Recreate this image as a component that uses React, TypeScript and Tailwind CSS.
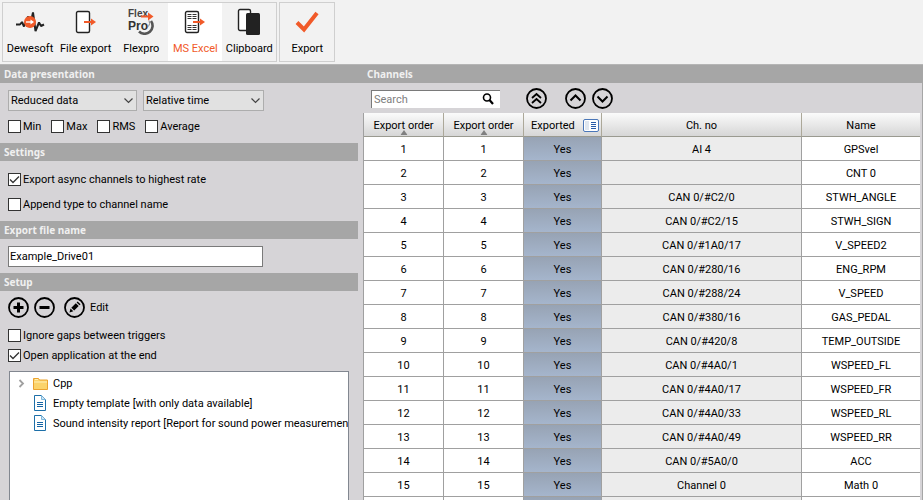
import type { ReactNode } from 'react'

interface Channel {
  order: number
  chNo: string
  name: string
}

const channels: Channel[] = [
  { order: 1, chNo: 'AI 4', name: 'GPSvel' },
  { order: 2, chNo: '', name: 'CNT 0' },
  { order: 3, chNo: 'CAN 0/#C2/0', name: 'STWH_ANGLE' },
  { order: 4, chNo: 'CAN 0/#C2/15', name: 'STWH_SIGN' },
  { order: 5, chNo: 'CAN 0/#1A0/17', name: 'V_SPEED2' },
  { order: 6, chNo: 'CAN 0/#280/16', name: 'ENG_RPM' },
  { order: 7, chNo: 'CAN 0/#288/24', name: 'V_SPEED' },
  { order: 8, chNo: 'CAN 0/#380/16', name: 'GAS_PEDAL' },
  { order: 9, chNo: 'CAN 0/#420/8', name: 'TEMP_OUTSIDE' },
  { order: 10, chNo: 'CAN 0/#4A0/1', name: 'WSPEED_FL' },
  { order: 11, chNo: 'CAN 0/#4A0/17', name: 'WSPEED_FR' },
  { order: 12, chNo: 'CAN 0/#4A0/33', name: 'WSPEED_RL' },
  { order: 13, chNo: 'CAN 0/#4A0/49', name: 'WSPEED_RR' },
  { order: 14, chNo: 'CAN 0/#5A0/0', name: 'ACC' },
  { order: 15, chNo: 'Channel 0', name: 'Math 0' },
]

/* ---------- Icons ---------- */

function DewesoftIcon() {
  return (
    <svg width="30" height="26" viewBox="0 0 30 26" fill="none" aria-hidden="true">
      <path
        d="M1 15.500h4l2-2.500 2 4.500 4-10 3 5 2-9 2.500 18.500 3.500-8.500 2 3.500 3-1.500"
        stroke="#222"
        strokeWidth="2"
        strokeLinejoin="bevel"
      />
      <circle cx="15" cy="13" r="6" fill="#f15a29" />
      <path d="M11 13h5" stroke="#fff" strokeWidth="1.400" />
      <path d="M15.500 10.500l3.500 2.500-3.500 2.500z" fill="#fff" />
    </svg>
  )
}

function FileExportIcon() {
  return (
    <svg width="22" height="24" viewBox="0 0 22 24" fill="none" aria-hidden="true">
      <rect x="1.500" y="1.500" width="13" height="21" rx="1.500" fill="#fff" stroke="#222" strokeWidth="1.400" />
      <path d="M9 12h8" stroke="#f15a29" strokeWidth="2" />
      <path d="M16 8.500l5 3.500-5 3.500z" fill="#f15a29" />
    </svg>
  )
}

function FlexproIcon() {
  return (
    <svg width="26" height="26" viewBox="0 0 26 26" aria-hidden="true">
      <path d="M23 12a8 8 0 0 1-12 10.500" fill="none" stroke="#555" strokeWidth="2.600" />
      <path d="M21 11.500a6 6 0 0 1-.5 6" fill="none" stroke="#888" />
      <text x="0" y="8" fontSize="10" fontWeight="bold" fontFamily="Liberation Sans, sans-serif" fill="#444">
        Flex
      </text>
      <text x="0" y="21" fontSize="12" fontWeight="bold" fontFamily="Liberation Sans, sans-serif" fill="#333">
        Pro
      </text>
      <path d="M13 7.500h8" stroke="#f15a29" strokeWidth="2" />
      <path d="M20 3.500l5.500 4-5.500 4z" fill="#f15a29" />
    </svg>
  )
}

function ExcelIcon() {
  return (
    <svg width="22" height="24" viewBox="0 0 22 24" fill="none" aria-hidden="true">
      <rect x="1.500" y="1.500" width="13" height="21" rx="1.500" fill="#fff" stroke="#222" strokeWidth="1.400" />
      <path
        d="M3.500 4.500h4M8.500 4.500h4M3.500 6.500h4M8.500 6.500h4M3.500 8.500h4M8.500 8.500h4M3.500 15.500h4M8.500 15.500h4M3.500 17.500h4M8.500 17.500h4M3.500 19.500h4M8.500 19.500h4"
        stroke="#333"
      />
      <path d="M9 12h8" stroke="#f15a29" strokeWidth="2" />
      <path d="M16 8.500l5 3.500-5 3.500z" fill="#f15a29" />
    </svg>
  )
}

function ClipboardIcon() {
  return (
    <svg width="24" height="28" viewBox="0 0 24 28" fill="none" aria-hidden="true">
      <rect x="1.500" y="1.500" width="12" height="21" rx="1.500" fill="#fff" stroke="#222" strokeWidth="1.400" />
      <rect x="9" y="5" width="14" height="22" rx="1.500" fill="#222" />
    </svg>
  )
}

function CheckIcon() {
  return (
    <svg width="24" height="24" viewBox="0 0 24 24" fill="none" aria-hidden="true">
      <path d="M2 12.500l7 7L22 3" stroke="#f15a29" strokeWidth="4" />
    </svg>
  )
}

function RoundIcon({ children }: { children: ReactNode }) {
  return (
    <svg width="21" height="21" viewBox="0 0 21 21" fill="none" stroke="#000" aria-hidden="true">
      <circle cx="10.500" cy="10.500" r="9.500" strokeWidth="1.800" />
      {children}
    </svg>
  )
}

function FolderIcon() {
  return (
    <svg width="15" height="13" viewBox="0 0 15 13" aria-hidden="true">
      <path d="M.5 12.500V1.500h5l1 1.500h8v9.500z" fill="#fbd36b" stroke="#eba22f" />
      <path d="M1 5h13" stroke="#fff0b8" />
      <path d="M2 2.500h3" stroke="#fff0b8" />
    </svg>
  )
}

function DocumentIcon() {
  return (
    <svg width="12" height="16" viewBox="0 0 12 16" fill="none" aria-hidden="true">
      <path d="M.5.500h7l4 4v11H.5z" fill="#fff" stroke="#1d6fa8" />
      <path d="M7.500.500v4h4" fill="#cfe6f5" stroke="#7db8dc" />
      <path d="M3 7.500h6M3 9.500h6M3 11.500h6" stroke="#1565a5" />
    </svg>
  )
}

/* ---------- Building blocks ---------- */

interface ToolButtonProps {
  label: string
  icon: ReactNode
  active?: boolean
}

function ToolButton({ label, icon, active }: ToolButtonProps) {
  return (
    <button
      className={`flex min-w-[54px] flex-col items-center px-[3px] pb-1 leading-4 ${
        active ? 'bg-white text-[#f15a29]' : 'text-black'
      }`}
    >
      <span className="flex h-[38px] items-center justify-center">{icon}</span>
      {label}
    </button>
  )
}

function SectionTitle({ children }: { children: ReactNode }) {
  return (
    <h2 className="h-[18px] shrink-0 bg-[#a6a6a6] pl-1 font-['Noto_Sans','DejaVu_Sans',sans-serif] text-[10px] leading-[18px] font-bold text-[#f0f0f0]">
      {children}
    </h2>
  )
}

function CheckBox({ label, checked }: { label: string; checked?: boolean }) {
  return (
    <label className="flex items-center gap-[2px]">
      <span className="relative flex size-[13px]">
        <input
          type="checkbox"
          defaultChecked={checked}
          className="peer size-[13px] appearance-none border border-[#333] bg-white"
        />
        <svg
          viewBox="0 0 13 13"
          className="pointer-events-none absolute inset-0 hidden size-[13px] peer-checked:block"
          fill="none"
          aria-hidden="true"
        >
          <path d="M2 6.500l3 3 6-6" stroke="#333" strokeWidth="1.300" />
        </svg>
      </span>
      {label}
    </label>
  )
}

function Dropdown({ label, value, className }: { label: string; value: string; className: string }) {
  return (
    <div className={`relative ${className}`}>
      <select
        aria-label={label}
        defaultValue={value}
        className="block h-[21px] w-full appearance-none border border-[#adadad] bg-[#e1e1e1] px-[2px]"
      >
        <option>{value}</option>
      </select>
      <svg
        className="pointer-events-none absolute top-[8px] right-[4px]"
        width="9"
        height="6"
        viewBox="0 0 9 6"
        fill="none"
        aria-hidden="true"
      >
        <path d="M.5.500l4 4 4-4" stroke="#444" strokeWidth="1.200" />
      </svg>
    </div>
  )
}

function SortMark() {
  return (
    <svg className="absolute bottom-[1px] left-1/2 -translate-x-1/2" width="7" height="5" viewBox="0 0 7 5" aria-hidden="true">
      <path d="M3.500 0L7 5H0z" fill="#808080" />
    </svg>
  )
}

/* ---------- Panels ---------- */

function Toolbar() {
  return (
    <header className="flex shrink-0 gap-[2px] border-b border-[#b5b5b5] bg-[#f2f2f2] p-[2px]">
      <div className="flex border border-[#cfcfcf]">
        <ToolButton label="Dewesoft" icon={<DewesoftIcon />} />
        <ToolButton label="File export" icon={<FileExportIcon />} />
        <ToolButton label="Flexpro" icon={<FlexproIcon />} />
        <ToolButton label="MS Excel" icon={<ExcelIcon />} active />
        <ToolButton label="Clipboard" icon={<ClipboardIcon />} />
      </div>
      <div className="flex border border-[#cfcfcf]">
        <ToolButton label="Export" icon={<CheckIcon />} />
      </div>
    </header>
  )
}

function OptionsPanel() {
  return (
    <aside className="flex w-[358px] shrink-0 flex-col">
      <SectionTitle>Data presentation</SectionTitle>
      <div className="px-2 pt-[7px] pb-[10px]">
        <div className="flex gap-[6px]">
          <Dropdown label="Data" value="Reduced data" className="w-[129px]" />
          <Dropdown label="Time" value="Relative time" className="w-[121px]" />
        </div>
        <div className="flex gap-[10px] pt-[9px]">
          <CheckBox label="Min" />
          <CheckBox label="Max" />
          <CheckBox label="RMS" />
          <CheckBox label="Average" />
        </div>
      </div>

      <SectionTitle>Settings</SectionTitle>
      <div className="flex flex-col gap-3 px-2 pt-3 pb-[10px]">
        <CheckBox label="Export async channels to highest rate" checked />
        <CheckBox label="Append type to channel name" />
      </div>

      <SectionTitle>Export file name</SectionTitle>
      <div className="px-2 pt-[7px] pb-[6px]">
        <input
          type="text"
          aria-label="Export file name"
          defaultValue="Example_Drive01"
          className="block h-[21px] w-[255px] border border-[#7a7a7a] bg-white px-[1px]"
        />
      </div>

      <SectionTitle>Setup</SectionTitle>
      <div className="flex min-h-0 flex-1 flex-col px-2 pt-[6px]">
        <div className="flex items-center gap-[5px]">
          <button aria-label="Add">
            <RoundIcon>
              <path d="M10.500 5.500v10M5.500 10.500h10" strokeWidth="3" />
            </RoundIcon>
          </button>
          <button aria-label="Remove">
            <RoundIcon>
              <path d="M5.500 10.500h10" strokeWidth="3" />
            </RoundIcon>
          </button>
          <button className="ml-1 flex items-center gap-[5px]">
            <RoundIcon>
              <path
                d="M5.500 15.500l1-4 2.800 2.800zM7.300 10.700l4.500-4.500 2.900 2.900-4.500 4.500zM12.600 5.400l1-1 2.900 2.900-1 1z"
                fill="#000"
                stroke="none"
              />
            </RoundIcon>
            Edit
          </button>
        </div>
        <div className="flex flex-col gap-[7px] pt-[11px]">
          <CheckBox label="Ignore gaps between triggers" />
          <CheckBox label="Open application at the end" checked />
        </div>
        <ul className="mx-[1px] mt-[9px] min-h-0 flex-1 overflow-hidden border border-b-0 border-[#828790] bg-white pt-[1px] pl-2">
          <li className="flex h-5 items-center">
            <svg width="7" height="9" viewBox="0 0 7 9" fill="none" className="mr-2" aria-hidden="true">
              <path d="M1.500 1L5 4.500 1.500 8" stroke="#a0a0a0" strokeWidth="1.800" />
            </svg>
            <span className="w-5">
              <FolderIcon />
            </span>
            Cpp
          </li>
          <li className="flex h-5 items-center pl-4">
            <span className="w-[19px] shrink-0">
              <DocumentIcon />
            </span>
            Empty template [with only data available]
          </li>
          <li className="flex h-5 items-center pl-4">
            <span className="w-[19px] shrink-0">
              <DocumentIcon />
            </span>
            <span className="whitespace-nowrap">Sound intensity report [Report for sound power measuremen</span>
          </li>
        </ul>
      </div>
    </aside>
  )
}

function ChannelTable() {
  const head =
    'relative h-6 border-r border-b border-r-[#aca899] border-b-[#9a9a90] bg-linear-to-b from-[#fbfbfb] to-[#d6d6d6] p-0 pt-[2px] font-normal last:border-r-0'
  const cell = 'h-6 border-r border-b border-[#a0a0a0] p-0 pt-[2px] last:border-r-0'

  return (
    <table className="w-full table-fixed border-separate border-spacing-0 border-l border-[#a0a0a0] text-center">
      <colgroup>
        <col className="w-[80px]" />
        <col className="w-[80px]" />
        <col className="w-[78px]" />
        <col className="w-[200px]" />
        <col />
      </colgroup>
      <thead>
        <tr>
          <th className={head}>
            Export order
            <SortMark />
          </th>
          <th className={head}>
            Export order
            <SortMark />
          </th>
          <th className={head}>
            <span className="flex items-center justify-between pr-[2px] pl-[7px]">
              Exported
              <svg width="16" height="13" viewBox="0 0 16 13" fill="none" aria-hidden="true">
                <rect x=".5" y=".5" width="15" height="12" rx="1.500" fill="#fff" stroke="#4a76b8" />
                <rect x="2" y="2" width="4" height="9" fill="#dfe6ef" />
                <path d="M8 3.500h5M8 5.500h5M8 7.500h5M8 9.500h5" stroke="#2a5ca8" />
              </svg>
            </span>
          </th>
          <th className={head}>Ch. no</th>
          <th className={head}>Name</th>
        </tr>
      </thead>
      <tbody>
        {channels.map((channel) => (
          <tr key={channel.order}>
            <td className={`${cell} bg-white`}>{channel.order}</td>
            <td className={`${cell} bg-white`}>{channel.order}</td>
            <td className={`${cell} bg-linear-to-b from-[#97a3b4] to-[#a5b5cc]`}>Yes</td>
            <td className={`${cell} bg-[#ececec]`}>{channel.chNo}</td>
            <td className={`${cell} bg-white`}>{channel.name}</td>
          </tr>
        ))}
        <tr>
          <td className={`${cell} bg-white`} />
          <td className={`${cell} bg-white`} />
          <td className={`${cell} bg-linear-to-b from-[#97a3b4] to-[#a5b5cc]`} />
          <td className={`${cell} bg-[#ececec]`} />
          <td className={`${cell} bg-white`} />
        </tr>
      </tbody>
    </table>
  )
}

function ChannelsPanel() {
  return (
    <main className="flex min-w-0 flex-1 flex-col overflow-hidden border-r border-[#a6a6a6]">
      <div className="bg-[#a6a6a6] pl-[5px]">
        <SectionTitle>Channels</SectionTitle>
      </div>
      <div className="flex items-center pt-[5px] pb-1 pl-[13px]">
        <div className="flex h-[18px] w-[129px] items-center border-t border-l border-[#7a7a7a] bg-white pr-[6px]">
          <input
            type="search"
            aria-label="Search"
            placeholder="Search"
            className="w-full min-w-0 px-[2px] outline-none placeholder:text-[#808080]"
          />
          <svg width="12" height="12" viewBox="0 0 12 12" fill="none" stroke="#000" className="shrink-0" aria-hidden="true">
            <circle cx="5" cy="4.500" r="3.500" strokeWidth="1.600" />
            <path d="M7.500 7l3.500 4" strokeWidth="2.200" />
          </svg>
        </div>
        <button aria-label="Move to top" className="ml-[26px]">
          <RoundIcon>
            <path d="M6 10l4.500-4 4.500 4M6 15l4.500-4 4.500 4" strokeWidth="1.800" />
          </RoundIcon>
        </button>
        <button aria-label="Move up" className="ml-[18px]">
          <RoundIcon>
            <path d="M5.500 12.500l5-5 5 5" strokeWidth="2" />
          </RoundIcon>
        </button>
        <button aria-label="Move down" className="ml-[6px]">
          <RoundIcon>
            <path d="M5.500 8.500l5 5 5-5" strokeWidth="2" />
          </RoundIcon>
        </button>
      </div>
      <div className="min-h-0 flex-1 overflow-hidden pr-[2px] pl-[5px]">
        <ChannelTable />
      </div>
    </main>
  )
}

export default function App() {
  return (
    <div className="flex h-screen flex-col overflow-hidden bg-[#d6d4d7] font-['Roboto','DejaVu_Sans',sans-serif] text-[11px] leading-[13px] text-black">
      <Toolbar />
      <div className="flex min-h-0 flex-1">
        <OptionsPanel />
        <ChannelsPanel />
      </div>
    </div>
  )
}
